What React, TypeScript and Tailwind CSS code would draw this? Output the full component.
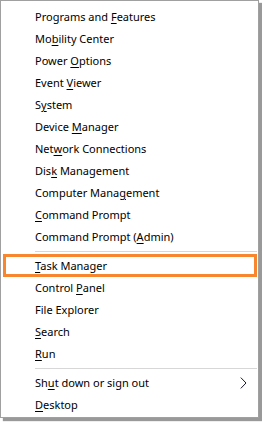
import type { ReactNode } from "react";

type Item = { before: string; key?: string; after?: string; arrow?: boolean; active?: boolean };

const groupOne: Item[] = [
  { before: "Programs and ", key: "F", after: "eatures" },
  { before: "Mo", key: "b", after: "ility Center" },
  { before: "Power ", key: "O", after: "ptions" },
  { before: "Event ", key: "V", after: "iewer" },
  { before: "S", key: "y", after: "stem" },
  { before: "Device ", key: "M", after: "anager" },
  { before: "Net", key: "w", after: "ork Connections" },
  { before: "Dis", key: "k", after: " Management" },
  { before: "Computer Mana", key: "g", after: "ement" },
  { before: "", key: "C", after: "ommand Prompt" },
  { before: "Command Prompt (", key: "A", after: "dmin)" },
];

const groupTwo: Item[] = [
  { before: "", key: "T", after: "ask Manager", active: true },
  { before: "Control ", key: "P", after: "anel" },
  { before: "File Explorer" },
  { before: "", key: "S", after: "earch" },
  { before: "", key: "R", after: "un" },
];

const groupThree: Item[] = [
  { before: "Sh", key: "u", after: "t down or sign out", arrow: true },
  { before: "", key: "D", after: "esktop" },
];

function Row({ item }: { item: Item }) {
  const label: ReactNode = (
    <span className="whitespace-pre">
      {item.before}
      {item.key && <u className="underline-offset-[2px]">{item.key}</u>}
      {item.after}
    </span>
  );
  return (
    <div className="relative h-[22px] flex items-center pl-[34px] pr-[10px]">
      <div className="flex-1">{label}</div>
      {item.arrow && (
        <svg width="7" height="12" viewBox="0 0 7 12" className="mr-[1px]">
          <path d="M0.8 0.6 L6 6 L0.8 11.4" fill="none" stroke="#1a1a2e" strokeWidth="1" />
        </svg>
      )}
      {item.active && (
        <div className="absolute -top-px bottom-0 left-[2px] right-px border-[3px] border-[#f7862e]" />
      )}
    </div>
  );
}

function Separator() {
  return <div className="h-px bg-[#d7d7d7] ml-[34px] mr-px my-[3px]" />;
}

export default function App() {
  return (
    <div className="w-[262px] h-[422px] bg-white">
      <div
        className="w-[259px] h-[418px] bg-white border border-[#a0a0a0] shadow-[3px_3px_1px_rgba(0,0,0,0.4)] pt-[5px] text-[11px] text-black"
        style={{ fontFamily: '"Noto Sans", "Open Sans", sans-serif' }}
      >
        {groupOne.map((item, i) => (
          <Row key={i} item={item} />
        ))}
        <Separator />
        {groupTwo.map((item, i) => (
          <Row key={i} item={item} />
        ))}
        <Separator />
        {groupThree.map((item, i) => (
          <Row key={i} item={item} />
        ))}
      </div>
    </div>
  );
}
